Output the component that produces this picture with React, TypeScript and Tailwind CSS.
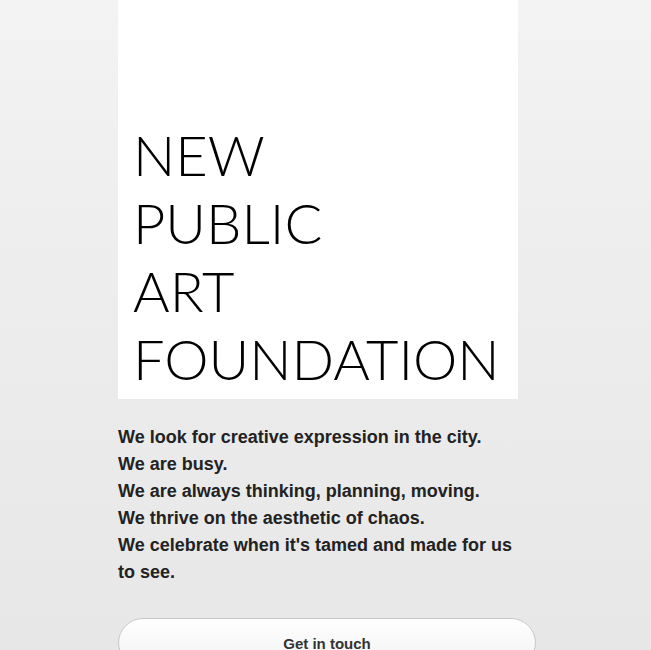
export default function App() {
	return (
		<div className="min-h-[650px] w-full bg-gradient-to-b from-[#f3f3f3] via-[#ececec] to-[#e7e7e7] overflow-hidden">
			<div className="ml-[118px] w-[400px]">
				<div className="bg-white h-[399px] flex flex-col justify-end pl-[15px] pb-[6px]">
					<h1 className="font-['Lato',sans-serif] font-light text-[56px] leading-[68px] text-black">
						NEW
						<br />
						PUBLIC
						<br />
						ART
						<br />
						FOUNDATION
					</h1>
				</div>
				<p className="mt-[25px] font-['Liberation_Sans',Arial,sans-serif] font-bold text-[18px] leading-[27px] text-[#222]">
					We look for creative expression in the city.
					<br />
					We are busy.
					<br />
					We are always thinking, planning, moving.
					<br />
					We thrive on the aesthetic of chaos.
					<br />
					We celebrate when it's tamed and made for us to see.
				</p>
				<button
					type="button"
					className="mt-[32px] w-[418px] h-[50px] rounded-full border border-[#c8c8c8] bg-gradient-to-b from-white to-[#f2f2f2] pt-[14px] font-['Liberation_Sans',Arial,sans-serif] font-bold text-[15px] text-[#333] flex justify-center items-start"
				>
					Get in touch
				</button>
			</div>
		</div>
	);
}
